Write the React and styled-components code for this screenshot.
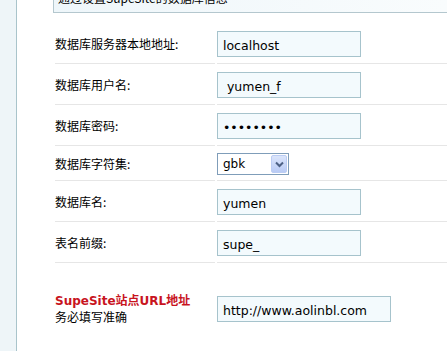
import React from 'react';
import styled, { createGlobalStyle } from 'styled-components';

const GlobalStyle = createGlobalStyle`
  html, body {
    margin: 0;
    padding: 0;
    background: #fff;
  }
  body {
    font-family: "Noto Sans CJK SC", "DejaVu Sans", sans-serif;
    font-size: 12px;
    color: #000;
  }
`;

const Page = styled.div`
  display: flex;
  min-height: 100vh;
  overflow: hidden;
`;

const SideRail = styled.div`
  flex: 0 0 16px;
  background: #eef5f8;
  border-right: 1px solid #a9c4cb;
`;

const Main = styled.div`
  flex: 1;
  min-width: 0;
  padding-left: 36px;
`;

const Notice = styled.div`
  margin-top: -18px;
  height: 31px;
  box-sizing: border-box;
  border: 1px solid #b4c7ce;
  border-right: none;
  background: linear-gradient(to right, #eef6fa, #f9fcfd);
  padding-left: 4px;
  line-height: 29px;
  font-size: 12px;
  white-space: nowrap;
`;

const Form = styled.div`
  display: grid;
  grid-template-columns: 160px 1fr;
  gap: 2px;
  padding: 12px 0 0 2px;
`;

const Cell = styled.div`
  display: flex;
  align-items: center;
  padding: ${p => p.$pad || 6}px 0;
  border-bottom: 1px solid #e6e6e6;
`;

const Label = styled.div`
  font-size: 12px;
  line-height: 16px;
`;

const Strong = styled.div`
  font-family: "DejaVu Sans", "Noto Sans CJK SC", sans-serif;
  font-weight: bold;
  color: #c8141e;
`;

const Field = styled.input`
  width: ${p => p.$w || 144}px;
  height: 26px;
  box-sizing: border-box;
  margin: 0;
  border: 1px solid #a6c3cc;
  background: #f3fafd;
  padding: 2px 5px 0;
  font-family: "DejaVu Sans", sans-serif;
  font-size: 12.5px;
  color: #000;
  outline: none;
`;

const Combo = styled.div`
  display: flex;
  align-items: center;
  width: 72px;
  height: 22px;
  box-sizing: border-box;
  border: 1px solid #7f9db9;
  background: #fff;
  padding: 1px;
`;

const ComboValue = styled.span`
  flex: 1;
  padding-left: 4px;
  font-family: "DejaVu Sans", sans-serif;
  font-size: 12px;
`;

const ComboButton = styled.span`
  display: flex;
  align-items: center;
  justify-content: center;
  width: 16px;
  height: 18px;
  box-sizing: border-box;
  border: 1px solid #bccdf4;
  border-radius: 2px;
  background: linear-gradient(#dbe5fb, #b9cbf5);
`;

const rows = [
  { label: '数据库服务器本地地址:', value: 'localhost' },
  { label: '数据库用户名:', value: ' yumen_f' },
  { label: '数据库密码:', value: 'password', type: 'password' },
  { label: '数据库字符集:', combo: 'gbk' },
  { label: '数据库名:', value: 'yumen' },
  { label: '表名前缀:', value: 'supe_' },
];

const Chevron = () => (
  <svg width="9" height="7" viewBox="0 0 9 7">
    <path d="M1 1.5 L4.5 5 L8 1.5" fill="none" stroke="#4d6185" strokeWidth="2" />
  </svg>
);

export default function App() {
  return (
    <>
      <GlobalStyle />
      <Page>
        <SideRail />
        <Main>
          <Notice>通过设置SupeSite的数据库信息</Notice>
          <Form>
            {rows.map(r => (
              <React.Fragment key={r.label}>
                <Cell $pad={r.combo ? 5 : 6}>
                  <Label>{r.label}</Label>
                </Cell>
                <Cell $pad={r.combo ? 5 : 6}>
                  {r.combo ? (
                    <Combo>
                      <ComboValue>{r.combo}</ComboValue>
                      <ComboButton><Chevron /></ComboButton>
                    </Combo>
                  ) : (
                    <Field type={r.type || 'text'} defaultValue={r.value} readOnly />
                  )}
                </Cell>
              </React.Fragment>
            ))}
            <Cell $pad={28}>
              <Label>
                <Strong>SupeSite站点URL地址</Strong>
                务必填写准确
              </Label>
            </Cell>
            <Cell $pad={28}>
              <Field $w={174} defaultValue="http://www.aolinbl.com" readOnly />
            </Cell>
          </Form>
        </Main>
      </Page>
    </>
  );
}
